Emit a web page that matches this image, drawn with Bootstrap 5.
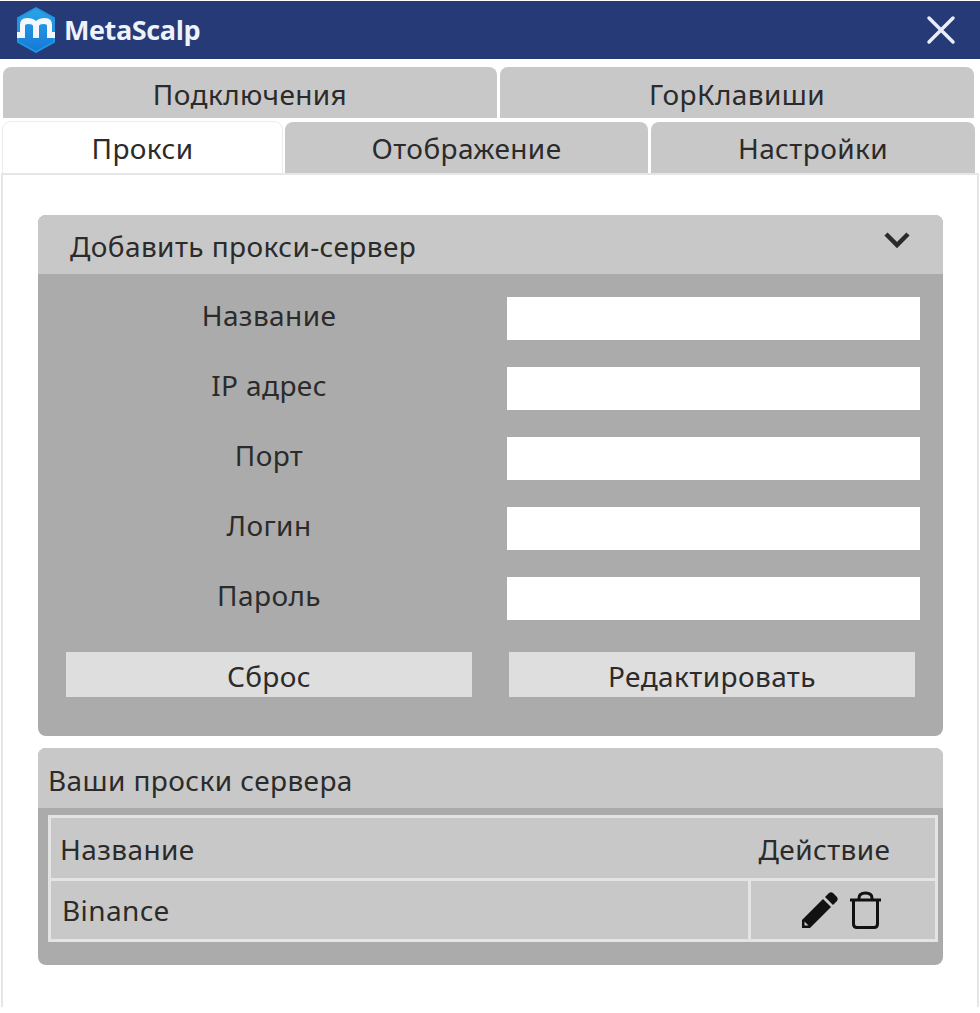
<!DOCTYPE html>
<html lang="ru">
<head>
  <meta charset="utf-8" />
  <meta name="viewport" content="width=device-width, initial-scale=1" />
  <title>MetaScalp</title>
  <link href="https://cdn.jsdelivr.net/npm/bootstrap@5.3.2/dist/css/bootstrap.min.css" rel="stylesheet" />
  <style>
    body {
      background: #fff;
      color: #2b2b2b;
      font-family: "Noto Sans", "Open Sans", sans-serif;
      font-size: 28px;
      letter-spacing: 0.4px;
      height: 1013px;
      overflow: hidden;
    }
    .title-bar {
      height: 58px;
      margin-top: 1px;
      background: #263a78;
      padding: 0 24px 0 15px;
    }
    .brand-name {
      color: #eef2fb;
      font-family: "Open Sans", sans-serif;
      font-weight: 700;
      font-size: 27px;
      letter-spacing: -0.4px;
      margin-left: 7px;
    }
    .tab-row {
      display: flex;
      gap: 3px;
      padding: 0 5px 0 3px;
      height: 51px;
    }
    .tab-row.first { margin-top: 8px; }
    .tab-row.second { margin-top: 4px; }
    .tab-item {
      background: #c8c8c8;
      border-radius: 8px 8px 0 0;
      display: flex;
      align-items: center;
      justify-content: center;
      padding-top: 3px;
    }
    .tab-row.second .tab-item { padding-top: 1px; }
    .tab-item.active {
      background: #fff;
      box-shadow: 0 -1px 0 #ececec, 1px 0 0 #ececec, -1px 0 0 #ececec;
    }
    .w-conn { width: 494px; }
    .w-keys { width: 474px; }
    .w-proxy { width: 279px; }
    .w-view { width: 363px; }
    .w-set { width: 324px; }
    .tab-panel {
      border: 2px solid #e6e6e6;
      border-bottom: 0;
      margin: 0 1px 0 1px;
      height: 834px;
      padding: 40px 34px 0 35px;
    }
    .box-one {
      background: #ababab;
      border-radius: 8px;
      height: 521px;
    }
    .box-head {
      background: #c8c8c8;
      border-radius: 8px 8px 0 0;
      height: 59px;
      padding: 0 32px;
    }
    .head-label { padding-top: 3px; }
    .chevron-icon { margin-bottom: 10px; }
    .form-rows {
      padding: 23px 23px 0 0;
      display: flex;
      flex-direction: column;
      gap: 27px;
    }
    .label-cell {
      width: 469px;
      text-align: center;
      line-height: 37px;
      padding: 0 7px 6px 0;
      flex: none;
    }
    .text-field {
      height: 43px;
      border: 0;
      border-radius: 0;
      background: #fff;
    }
    .btn-rows {
      display: flex;
      gap: 37px;
      padding: 32px 28px 0 28px;
    }
    .btn-grey {
      flex: 1;
      height: 45px;
      background: #dedede;
      border: 0;
      border-radius: 0;
      color: #2b2b2b;
      font-size: 28px;
      letter-spacing: 0.4px;
      line-height: 49px;
      padding: 0;
    }
    .box-two {
      background: #ababab;
      border-radius: 8px;
      height: 217px;
      margin-top: 12px;
    }
    .box-two .box-head { height: 60px; padding: 0 10px; }
    .proxy-table {
      margin: 7px 5px 0 10px;
      border: 3px solid #e4e4e4;
      background: #c8c8c8;
      height: 127px;
    }
    .proxy-row {
      display: flex;
      height: 60px;
      align-items: center;
    }
    .proxy-row + .proxy-row {
      border-top: 3px solid #e4e4e4;
      height: 61px;
    }
    .name-cell { flex: 1; padding: 2px 0 0 9px; }
    .proxy-row + .proxy-row .name-cell { padding: 0 0 0 11px; }
    .action-cell {
      width: 187px;
      height: 100%;
      display: flex;
      align-items: center;
      justify-content: center;
      gap: 10px;
      padding: 2px 34px 0 0;
    }
    .proxy-row + .proxy-row .action-cell {
      border-left: 3px solid #e4e4e4;
      padding: 0 4px 0 0;
    }
  </style>
</head>
<body>
  <!-- Заголовок окна -->
  <div class="title-bar d-flex align-items-center justify-content-between">
    <div class="d-flex align-items-center">
      <svg width="42" height="46" viewBox="0 0 42 46">
        <defs>
          <linearGradient id="logoFill" x1="0" y1="0" x2="0" y2="1">
            <stop offset="0" stop-color="#2aa5e8" />
            <stop offset="1" stop-color="#1578d6" />
          </linearGradient>
        </defs>
        <path d="M21 1 39 11V35L21 45 3 35V11Z" fill="url(#logoFill)" stroke="#2196e2" stroke-width="2" stroke-linejoin="round" />
        <path d="M2 25H5V18Q5 11 12 11Q18 11 21 14Q24 11 30 11Q37 11 37 18V25H40V31H32V19Q32 17 29 17Q24 17 24 19V31H18V19Q18 17 13 17Q10 17 10 19V31H2Z" fill="#f2f7fd" />
      </svg>
      <span class="brand-name">MetaScalp</span>
    </div>
    <svg width="30" height="30" viewBox="0 0 30 30">
      <path d="M3 3 27 27M27 3 3 27" stroke="#e9eefa" stroke-width="3.500" stroke-linecap="round" />
    </svg>
  </div>

  <!-- Вкладки -->
  <div class="tab-row first">
    <div class="tab-item w-conn">Подключения</div>
    <div class="tab-item w-keys">ГорКлавиши</div>
  </div>
  <div class="tab-row second">
    <div class="tab-item w-proxy active">Прокси</div>
    <div class="tab-item w-view">Отображение</div>
    <div class="tab-item w-set">Настройки</div>
  </div>

  <div class="tab-panel">
    <div class="box-one">
      <div class="box-head d-flex align-items-center justify-content-between">
        <span class="head-label">Добавить прокси-сервер</span>
        <svg class="chevron-icon" width="28" height="18" viewBox="0 0 28 18">
          <path d="M3 3 14 14 25 3" fill="none" stroke="#2b2b2b" stroke-width="4.500" />
        </svg>
      </div>
      <div class="form-rows">
        <div class="d-flex align-items-center"><div class="label-cell">Название</div><input class="form-control text-field" type="text" /></div>
        <div class="d-flex align-items-center"><div class="label-cell">IP адрес</div><input class="form-control text-field" type="text" /></div>
        <div class="d-flex align-items-center"><div class="label-cell">Порт</div><input class="form-control text-field" type="text" /></div>
        <div class="d-flex align-items-center"><div class="label-cell">Логин</div><input class="form-control text-field" type="text" /></div>
        <div class="d-flex align-items-center"><div class="label-cell">Пароль</div><input class="form-control text-field" type="text" /></div>
      </div>
      <div class="btn-rows">
        <button type="button" class="btn btn-grey">Сброс</button>
        <button type="button" class="btn btn-grey">Редактировать</button>
      </div>
    </div>

    <div class="box-two">
      <div class="box-head d-flex align-items-center"><span class="head-label">Ваши проски сервера</span></div>
      <div class="proxy-table">
        <div class="proxy-row">
          <div class="name-cell">Название</div>
          <div class="action-cell">Действие</div>
        </div>
        <div class="proxy-row">
          <div class="name-cell">Binance</div>
          <div class="action-cell">
            <svg width="38" height="38" viewBox="0 0 38 38">
              <path d="M1 37V29L22 8 30 16 9 37ZM24 6 28 2Q30 0.500 32 2L36 6Q37.500 8 36 10L32 14Z" fill="#111" />
              <path d="M3.500 30.500 7.500 34.500H3.500Z" fill="#c8c8c8" />
            </svg>
            <svg width="33" height="38" viewBox="0 0 33 38">
              <path d="M1 9H32M4.500 9V33Q4.500 36.500 8 36.500H25Q28.500 36.500 28.500 33V9M10 9V7Q10 2 16.500 2Q23 2 23 7V9" fill="none" stroke="#111" stroke-width="3" />
            </svg>
          </div>
        </div>
      </div>
    </div>
  </div>

  <script src="https://cdn.jsdelivr.net/npm/bootstrap@5.3.2/dist/js/bootstrap.bundle.min.js"></script>
</body>
</html>
